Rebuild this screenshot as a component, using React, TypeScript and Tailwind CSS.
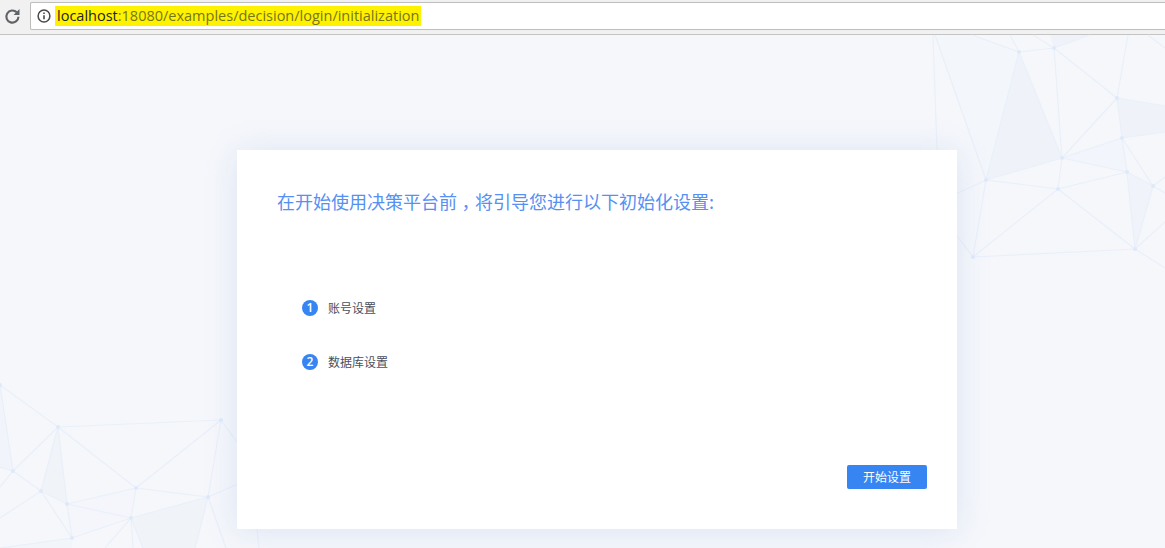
import React from "react";

type P = [number, number];
const N: Record<string, P> = {
  A: [1019, 52], B: [1054, 48], C: [1117, 98], D: [1122, 138], E: [1062, 158], F: [986, 180],
  G: [1058, 189], H: [1127, 172], I: [1153, 186], J: [1135, 249], K: [973, 257],
  a: [0, 385], b: [58, 427], c: [221, 420], d: [13, 471], e: [41, 491], f: [67, 504],
  g: [136, 488], h: [131, 518], i: [208, 497], j: [72, 538],
};
const lines: [P | string, P | string][] = [
  [[933, 35], [937, 150]], [[935, 35], "F"], [[972, 35], "A"], [[1010, 35], "A"], ["A", "B"], ["A", "E"], ["A", "F"],
  [[1033, 35], "B"], [[1090, 35], "B"], ["B", "C"], ["B", "E"], [[1128, 35], "C"], ["C", "D"], ["C", "E"],
  ["C", [1165, 106]], ["D", [1165, 132]], ["D", "E"], ["D", "H"], ["D", "I"], ["E", "F"], ["E", "G"], ["E", "H"],
  ["F", "G"], ["F", "K"], ["F", [900, 220]], ["G", "H"], ["G", "K"], ["G", "J"], ["H", "I"], ["H", "J"], ["I", "J"],
  ["I", [1165, 177]], ["I", [1165, 193]], ["J", [1165, 222]], ["J", [1165, 268]], ["K", "J"], ["K", [930, 200]],
  [[1148, 35], [1165, 48]],
  ["a", "b"], ["a", "d"], ["b", "c"], ["b", "d"], ["b", "e"], ["b", "f"], ["b", "g"], ["c", "g"], ["c", "i"], ["c", [250, 460]],
  ["d", "e"], ["e", "f"], ["e", "j"], ["f", "g"], ["f", "h"], ["f", "j"], ["g", "h"], ["g", "i"], ["h", "i"], ["h", "j"],
  ["i", [270, 470]], ["d", [0, 467]], ["d", [0, 487]], ["e", [0, 518]], ["j", [0, 548]], ["h", [105, 548]], ["h", [133, 548]],
  ["h", [143, 548]], ["i", [195, 548]], ["i", [226, 548]], [[257, 529], [259, 548]],
];
const fills: { pts: (P | string)[]; c: string }[] = [
  { pts: [[935, 35], [972, 35], "A", "F"], c: "#f3f6fb" },
  { pts: ["A", "E", "F"], c: "#eff3f9" },
  { pts: ["C", "D", [1165, 132], [1165, 106]], c: "#eff3f9" },
  { pts: ["E", "D", "H"], c: "#f2f5fb" },
  { pts: ["H", "I", "J"], c: "#f0f4fa" },
  { pts: ["B", [1050, 35], [1090, 35]], c: "#eff3f9" },
  { pts: ["a", "d", [0, 467]], c: "#f1f4fa" },
  { pts: ["b", "e", "f"], c: "#f0f4f9" },
  { pts: ["f", "g", "h"], c: "#f4f6fb" },
  { pts: ["h", "i", [195, 548], [143, 548]], c: "#f0f4f9" },
  { pts: ["f", "h", "j"], c: "#f4f6fb" },
  { pts: ["j", [0, 548], [72, 548]], c: "#f2f5fa" },
];
const pt = (p: P | string): P => (typeof p === "string" ? N[p] : p);

function Mesh() {
  return (
    <svg className="absolute left-0 top-0" width="1165" height="548" viewBox="0 0 1165 548">
      {fills.map((f, i) => (
        <polygon key={i} points={f.pts.map((p) => pt(p).join(",")).join(" ")} fill={f.c} />
      ))}
      {lines.map(([a, b], i) => {
        const p = pt(a);
        const q = pt(b);
        return <line key={i} x1={p[0]} y1={p[1]} x2={q[0]} y2={q[1]} stroke="#e9f0fa" strokeWidth="1.2" />;
      })}
      {Object.values(N).map((p, i) => (
        <circle key={i} cx={p[0]} cy={p[1]} r="2" fill="#dfe9f8" />
      ))}
    </svg>
  );
}

function Step({ n, label }: { n: number; label: string }) {
  return (
    <div className="flex items-center gap-[10px]">
      <span className="flex h-4 w-4 items-center justify-center rounded-full bg-[#3685f2] font-['Open_Sans',sans-serif] text-[12px] font-semibold leading-none text-white">{n}</span>
      <span className="text-[12px] leading-4 text-[#4a4f5c]">{label}</span>
    </div>
  );
}

export default function App() {
  return (
    <div className="flex h-[548px] w-[1165px] flex-col overflow-hidden bg-[#f5f7fb] font-['Noto_Sans_CJK_SC',sans-serif]">
      <header className="flex h-[35px] shrink-0 items-start border-b border-[#c4c4c4] bg-[#f1f1f1] pt-[2px]">
        <svg className="ml-[4px] mt-[6px] h-[17px] w-[17px]" viewBox="0 0 16 16" fill="none">
          <path d="M13.6 8.2a5.7 5.7 0 1 1-1.6-4.1" stroke="#5f6368" strokeWidth="2" />
          <path d="M14.6 0.9v5.6H9z" fill="#5f6368" />
        </svg>
        <div className="ml-[9px] flex h-[28px] flex-1 items-center rounded-l-[2px] border border-r-0 border-[#bdbdbd] bg-white pl-[6px]">
          <svg className="h-[14px] w-[14px]" viewBox="0 0 14 14" fill="none">
            <circle cx="7" cy="7" r="5.9" stroke="#4a4a4a" strokeWidth="1.5" />
            <path d="M7 6.2v4M7 3.4v1.6" stroke="#4a4a4a" strokeWidth="1.6" />
          </svg>
          <span className="ml-[4px] bg-[#fff200] px-[2px] font-['Open_Sans',sans-serif] text-[14.5px] leading-[20px] text-[#76761a]">
            <span className="text-[#222]">localhost</span>:18080/examples/decision/login/initialization
          </span>
        </div>
      </header>
      <main className="relative flex-1">
        <div className="absolute left-0 top-[-35px]"><Mesh /></div>
        <section className="relative ml-[237px] mt-[115px] flex h-[379px] w-[720px] flex-col bg-white pl-10 pr-[30px] shadow-[0_2px_30px_rgba(190,205,235,0.45)]">
          <h1 className="mt-[38px] text-[18px] font-normal leading-[26px] text-[#5590f2]">
            在开始使用决策平台前<span className="inline-block w-[18px] text-center [font-feature-settings:'halt']">，</span>将引导您进行以下初始化设置:
          </h1>
          <div className="ml-[25px] mt-[86px] flex flex-col gap-[38px]">
            <Step n={1} label="账号设置" />
            <Step n={2} label="数据库设置" />
          </div>
          <button className="mt-[95px] h-6 w-20 self-end rounded-[2px] bg-[#3685f2] text-[12px] text-white">开始设置</button>
        </section>
      </main>
    </div>
  );
}
